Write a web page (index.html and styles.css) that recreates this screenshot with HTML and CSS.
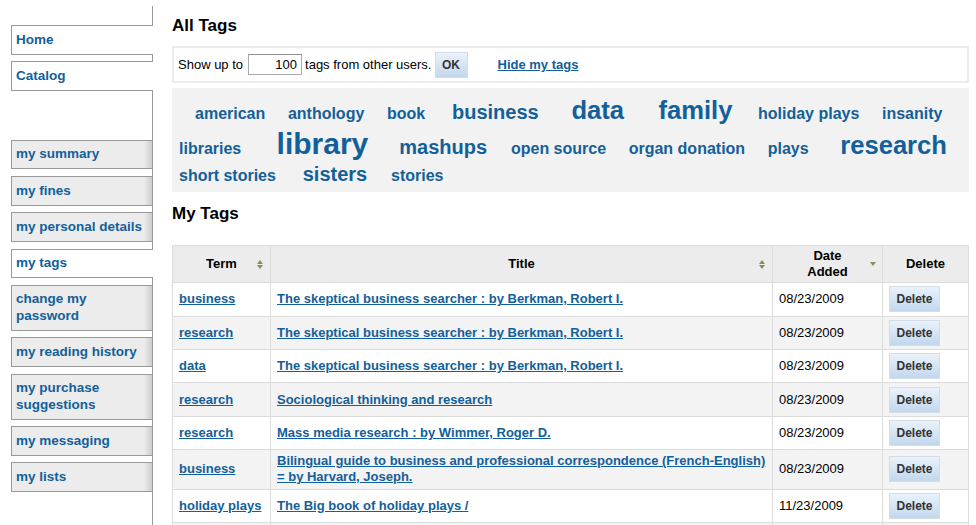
FILE: index.html
```html
<!DOCTYPE html>
<html lang="en">
<head>
<meta charset="utf-8">
<title>My Tags</title>
<link rel="stylesheet" href="styles.css">
</head>
<body>
<div class="page">
  <nav class="sidebar">
    <ul class="tabs">
      <li class="nav-item"><a href="#">Home</a></li>
      <li class="nav-item"><a href="#">Catalog</a></li>
    </ul>
    <ul class="menu">
      <li class="nav-item"><a href="#">my summary</a></li>
      <li class="nav-item"><a href="#">my fines</a></li>
      <li class="nav-item"><a href="#">my personal details</a></li>
      <li class="nav-item active"><a href="#">my tags</a></li>
      <li class="nav-item"><a href="#">change my password</a></li>
      <li class="nav-item"><a href="#">my reading history</a></li>
      <li class="nav-item"><a href="#">my purchase suggestions</a></li>
      <li class="nav-item"><a href="#">my messaging</a></li>
      <li class="nav-item"><a href="#">my lists</a></li>
    </ul>
  </nav>

  <main class="content">
    <h1 class="heading">All Tags</h1>
    <form class="tagform">
      <label for="limit">Show up to</label>
      <input id="limit" class="count" type="text" value="100">
      <span>tags from other users.</span>
      <button type="button" class="btn btn-ok">OK</button>
      <a href="#" class="hide-link">Hide my tags</a>
    </form>

    <div class="cloud">
      <a href="#" class="tag s16 first">american</a>
      <a href="#" class="tag s16">anthology</a>
      <a href="#" class="tag s16">book</a>
      <a href="#" class="tag s20">business</a>
      <a href="#" class="tag s26">data</a>
      <a href="#" class="tag s26">family</a>
      <a href="#" class="tag s16">holiday plays</a>
      <a href="#" class="tag s16">insanity</a>
      <a href="#" class="tag s16 lead">libraries</a>
      <a href="#" class="tag s30">library</a>
      <a href="#" class="tag s20">mashups</a>
      <a href="#" class="tag s16">open source</a>
      <a href="#" class="tag s16">organ donation</a>
      <a href="#" class="tag s16">plays</a>
      <a href="#" class="tag s26">research</a>
      <a href="#" class="tag s16 lead">short stories</a>
      <a href="#" class="tag s20">sisters</a>
      <a href="#" class="tag s16">stories</a>
    </div>

    <h2 class="heading sub">My Tags</h2>
    <table class="tags">
      <thead>
        <tr>
          <th class="c-term sort-both">Term</th>
          <th class="c-title sort-both">Title</th>
          <th class="c-date sort-desc">Date<br>Added</th>
          <th class="c-del">Delete</th>
        </tr>
      </thead>
      <tbody>
        <tr><td><a href="#">business</a></td><td><a href="#">The skeptical business searcher : by Berkman, Robert I.</a></td><td>08/23/2009</td><td><button type="button" class="btn btn-del">Delete</button></td></tr>
        <tr><td><a href="#">research</a></td><td><a href="#">The skeptical business searcher : by Berkman, Robert I.</a></td><td>08/23/2009</td><td><button type="button" class="btn btn-del">Delete</button></td></tr>
        <tr><td><a href="#">data</a></td><td><a href="#">The skeptical business searcher : by Berkman, Robert I.</a></td><td>08/23/2009</td><td><button type="button" class="btn btn-del">Delete</button></td></tr>
        <tr><td><a href="#">research</a></td><td><a href="#">Sociological thinking and research</a></td><td>08/23/2009</td><td><button type="button" class="btn btn-del">Delete</button></td></tr>
        <tr><td><a href="#">research</a></td><td><a href="#">Mass media research : by Wimmer, Roger D.</a></td><td>08/23/2009</td><td><button type="button" class="btn btn-del">Delete</button></td></tr>
        <tr><td><a href="#">business</a></td><td><a href="#">Bilingual guide to business and professional correspondence (French-English) = by Harvard, Joseph.</a></td><td>08/23/2009</td><td><button type="button" class="btn btn-del">Delete</button></td></tr>
        <tr><td><a href="#">holiday plays</a></td><td><a href="#">The Big book of holiday plays /</a></td><td>11/23/2009</td><td><button type="button" class="btn btn-del">Delete</button></td></tr>
        <tr><td><a href="#">plays</a></td><td><a href="#">The Big book of holiday plays /</a></td><td>11/23/2009</td><td><button type="button" class="btn btn-del">Delete</button></td></tr>
      </tbody>
    </table>
  </main>
</div>
</body>
</html>
```

FILE: styles.css
```css
* { box-sizing: border-box; }

html, body {
  margin: 0;
  padding: 0;
  background: #fff;
}

body {
  font-family: "Liberation Sans", Arial, Helvetica, sans-serif;
  font-size: 13px;
  color: #000;
}

a { color: #12609a; }

.page {
  display: flex;
  align-items: stretch;
  min-height: 100vh;
}

/* ---------- sidebar ---------- */
.sidebar {
  flex: 0 0 153px;
  margin-top: 6px;
  border-right: 1px solid #999;
}

.sidebar ul {
  list-style: none;
  margin: 0;
  padding: 0;
}

.sidebar .tabs { padding-top: 19px; }
.sidebar .menu { margin-top: 49.3px; }

.nav-item {
  margin: 0 -1px 6.7px 11px;
  padding: 5.5px 4px;
  line-height: 16.5px;
  border: 1px solid #999;
  border-right: none;
  background: #fff;
  font-weight: bold;
  font-size: 13.5px;
}

.nav-item a { text-decoration: none; }

.menu .nav-item {
  border-right: 1px solid #999;
  background: linear-gradient(to right, #ececec calc(100% - 8px), #cdcdcd);
}

.menu .nav-item.active {
  border-right: none;
  background: #fff;
}

/* ---------- content ---------- */
.content {
  flex: 0 0 796px;
  margin-left: 19px;
  padding-top: 16px;
}

.heading {
  margin: 0 0 10px;
  font-size: 17px;
  line-height: 20px;
  font-weight: bold;
}

.heading.sub {
  margin: 12px 0 21px;
}

.tagform {
  display: flex;
  align-items: center;
  height: 37px;
  margin: 1px 0 0;
  padding: 0 4px;
  border: 2px solid #ececec;
  background: #fff;
}

.tagform label { margin-right: 5px; }

.count {
  width: 54px;
  height: 21px;
  margin: 0 3px 0 0;
  padding: 0 4px;
  border: 1px solid #aaa;
  border-top-color: #8e8e8e;
  font-family: inherit;
  font-size: 13px;
  text-align: right;
  color: #000;
}

.btn {
  height: 26px;
  padding: 0;
  border: 1px solid #d3dde8;
  background: linear-gradient(to bottom, #eaf2fb, #c2d7ed);
  font-family: inherit;
  font-size: 12px;
  font-weight: bold;
  color: #333;
}

.btn-ok {
  width: 33px;
  margin-left: 3px;
}

.hide-link {
  margin-left: 30px;
  font-weight: bold;
}

/* ---------- tag cloud ---------- */
.cloud {
  margin-top: 5px;
  padding: 7px 6px 6px 7px;
  background: #f2f2f2;
  font-size: 18px;
  line-height: 1.2;
}

.tag {
  font-weight: bold;
  text-decoration: none;
  margin: 0 0.3em 0 0.85em;
  line-height: 1.2;
  white-space: nowrap;
}

.tag.s16 { margin-left: 0.8em; }
.tag.first { margin-left: 1em; }
.tag.lead { margin-left: 0; }

.s16 { font-size: 16px; }
.s20 { font-size: 20px; }
.s26 { font-size: 25.6px; }
.s30 { font-size: 30px; }

/* ---------- table ---------- */
.tags {
  width: 796px;
  table-layout: fixed;
  border-collapse: collapse;
}

.tags th,
.tags td {
  border: 1px solid #dcdcdc;
  line-height: 16px;
  vertical-align: middle;
}

.tags th {
  position: relative;
  padding: 2px 6px;
  background: #ececec;
  font-weight: bold;
  text-align: center;
}

.tags td {
  padding: 3.2px 6px;
  text-align: left;
}

.tags td a { font-weight: bold; }

.tags tbody tr:nth-child(even) td { background: #f3f3f3; }

.c-term { width: 98px; }
.c-title { width: 502px; }
.c-date { width: 110px; }
.c-del { width: 86px; }

.btn-del { width: 51px; }

/* sort indicators */
.sort-both::before,
.sort-both::after,
.sort-desc::after {
  content: "";
  position: absolute;
  right: 7px;
  width: 0;
  height: 0;
  border-left: 3.5px solid transparent;
  border-right: 3.5px solid transparent;
}

.sort-both::before {
  top: 14px;
  border-bottom: 4px solid #8c8c58;
}

.sort-both::after {
  top: 19px;
  border-top: 4px solid #8c8c58;
}

.sort-desc::after {
  right: 6px;
  top: 16px;
  border-top: 4px solid #8c8c58;
}
```
